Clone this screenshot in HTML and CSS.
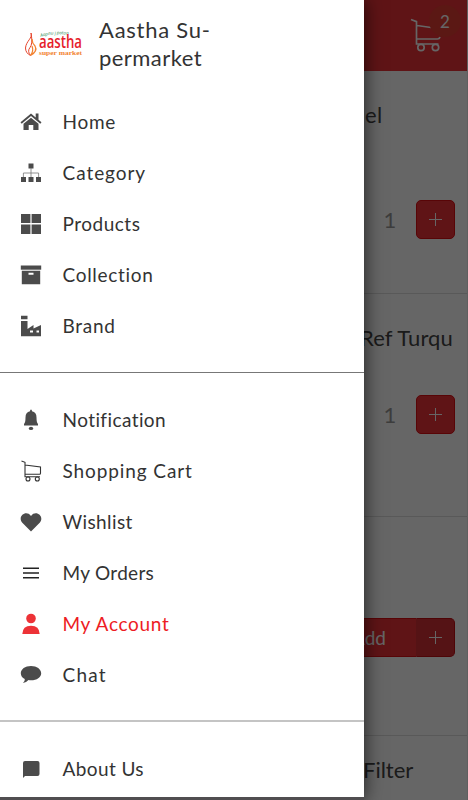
FILE: index.html
```html
<!DOCTYPE html>
<html lang="en">
<head>
<meta charset="utf-8">
<title>Aastha Supermarket</title>
<link rel="stylesheet" href="styles.css">
</head>
<body>
<div class="screen">
  <main class="shop">
    <header class="topbar">
      <div class="cart">
        <svg width="32" height="34" viewBox="0 0 32 34" fill="none" stroke="#fff" stroke-width="1.7"><path d="M1 1.500l5.500 2.200v22.300h22M7 7.500l14 2M7 21h20.500q2 0 2.500-2"/><circle cx="11" cy="29.500" r="3.200"/><circle cx="25.500" cy="29.500" r="3.200"/></svg>
        <span class="badge">2</span>
      </div>
    </header>
    <section class="product first">
      <h2 class="name n1">el</h2>
      <div class="stepper"><span class="minus"></span><span class="qty">1</span><span class="plus"></span></div>
    </section>
    <section class="product second">
      <h2 class="name n2">Ref Turqu</h2>
      <div class="stepper"><span class="minus"></span><span class="qty">1</span><span class="plus"></span></div>
    </section>
    <section class="product third">
      <div class="add"><span class="add-label">Add</span><span class="plus darker"></span></div>
    </section>
    <section class="product fourth"><h2 class="name n4">Filter</h2></section>
  </main>
  <div class="scrim"></div>
  <aside class="drawer">
    <div class="brand">
      <svg class="logo" width="60" height="32" viewBox="0 0 60 32">
        <path d="M7 4C9 9 2 12 1.500 19q0 5 5 7.500Q3 22 6 18.500 9 15 7 4" fill="none" stroke="#e6452c" stroke-width="1"/>
        <path d="M8 10q0 4 3 7 3 5-4.500 9.500Q10 22 8 17" fill="none" stroke="#f28331" stroke-width="1.300"/>
        <path id="arc" d="M17 8Q28 4 46 6" fill="none"/>
        <text class="logo-tag"><textPath href="#arc">Aapnu j potanu</textPath></text>
        <text class="logo-name" x="15" y="19" textLength="43" lengthAdjust="spacingAndGlyphs">aastha</text>
        <text class="logo-sub" x="15" y="26" textLength="43" lengthAdjust="spacingAndGlyphs">super market</text>
      </svg>
      <h1 class="title">Aastha Su-<br><span class="title-end">permarket</span></h1>
    </div>
    <nav>
      <ul class="menu">
        <li><svg viewBox="0 0 22 22"><path d="M11 2.500L.5 11.300l1.200 1.400L11 5.100l9.300 7.600 1.200-1.400-3-2.500V2.500h-2.800v3.900zM11 6.700l-7.500 6.100V19h5.200v-5h4.600v5h5.200v-6.200z"/></svg><span class="t-home">Home</span></li>
        <li><svg viewBox="0 0 22 22"><path d="M8.500 1.500h5v5h-5zM1 15h5v5H1zM8.500 15h5v5h-5zM16 15h5v5h-5z"/><path d="M11 6v9M3.400 15v-4h15.200v4" fill="none" stroke="#777" stroke-width=".8"/></svg><span class="t-category">Category</span></li>
        <li><svg viewBox="0 0 22 22"><path d="M1 1h9.400v9H1zM11.600 1H21v9h-9.400zM1 11.500h9.400V21H1zM11.600 11.500H21V21h-9.400z"/></svg><span class="t-products">Products</span></li>
        <li><svg viewBox="0 0 22 22"><path d="M.8 1.500h20.400v4.200H.8z"/><path fill-rule="evenodd" d="M1.800 6.800h18.400v13.400H1.800zM8.500 8.700v2h5v-2z"/></svg><span>Collection</span></li>
        <li><svg viewBox="0 0 22 22"><path fill-rule="evenodd" d="M1 .8h6.500v3.500H1zM1 6h6.500v8l6-4v3.500L21 10v11.200H1zM10 15.500v2h3v-2zM16.500 15.500v2h2.500v-2z"/></svg><span>Brand</span></li>
      </ul>
      <ul class="menu">
        <li><svg viewBox="0 0 22 22"><path d="M10 2.200q0-1.700 1-1.700t1 1.700q4.500.8 4.500 6.300 0 5 1.500 6.500v1.500H4V15q1.500-1.500 1.500-6.500 0-5.500 4.500-6.300z"/><ellipse cx="11" cy="19.400" rx="2.200" ry="1.700"/></svg><span class="t-notification">Notification</span></li>
        <li><svg viewBox="0 0 22 22" class="line"><path d="M1.500 1l3.500 1.300v14.500h15M5 5l15.500 2v6.200q0 1-1 1H5"/><circle cx="8" cy="19" r="2"/><circle cx="17.300" cy="19" r="2"/></svg><span class="t-shopping">Shopping Cart</span></li>
        <li><svg viewBox="0 0 22 22"><path d="M11 20.500L2.300 11.800C-3 5.500 6-1.500 11 4.900c5-6.400 14 .6 8.700 6.900z"/></svg><span class="t-wishlist">Wishlist</span></li>
        <li><svg viewBox="0 0 22 22" class="bars"><path d="M3 5.500h16V7H3zM3 10.200h16v1.500H3zM3 14.900h16v1.500H3z"/></svg><span class="t-orders">My Orders</span></li>
        <li class="active"><svg viewBox="0 0 22 22"><circle cx="11" cy="5.500" r="4.800"/><path d="M2.300 21q.3-8.300 8.700-8.300T19.700 21z"/></svg><span>My Account</span></li>
        <li><svg viewBox="0 0 22 22"><path d="M11 2c5.800 0 10.200 3.200 10.200 7.200s-4.400 7.100-10.200 7.100q-1.300 0-2.500-.2-2.500 2.800-5.500 2.900 2-1.500 1.800-4C2.300 13.800.8 11.700.8 9.200.8 5.200 5.200 2 11 2z"/></svg><span class="t-chat">Chat</span></li>
      </ul>
      <ul class="menu light">
        <li><svg viewBox="0 0 22 22"><path d="M5 3h12.500q2 0 2 2v11q0 2-2 2H5l-2 2V5q0-2 2-2z"/></svg><span class="t-about">About Us</span></li>
      </ul>
    </nav>
  </aside>
</div>
</body>
</html>
```
FILE: styles.css
```css
* { box-sizing: border-box; }
body, h1, h2, ul { margin: 0; padding: 0; }
body { font-family: Lato, "Open Sans", sans-serif; background: #fff; }
.screen { position: relative; width: 468px; height: 800px; overflow: hidden; }

.shop { height: 800px; display: flex; flex-direction: column; background: #fff; border-right: 1px solid #eee; color: #444; }
.topbar { height: 71px; flex: none; display: flex; justify-content: flex-end; padding: 18px 25px 0 0; background: #ed3237; }
.cart { position: relative; width: 32px; height: 34px; }
.badge { position: absolute; left: 19px; top: -13px; width: 32px; height: 32px; border-radius: 50%; background: #e43d33; color: #fff; font-size: 17px; line-height: 34px; text-align: center; }
.product { flex: none; border-bottom: 1px solid #dedede; padding-right: 12px; }
.first, .second { height: 223px; }
.third { height: 219px; padding-top: 101px; }
.fourth { height: 64px; border: 0; }
.name { font-weight: 400; font-size: 22px; line-height: 28px; padding-top: 30px; letter-spacing: .35px; white-space: nowrap; }
.n1 { padding-left: 365px; }
.n2 { padding-left: 360px; letter-spacing: .1px; }
.n4 { padding: 20px 0 0 363px; letter-spacing: 0; }
.stepper { display: flex; justify-content: flex-end; align-items: center; margin-top: 71px; }
.second .stepper { margin-top: 43px; }
.minus { width: 39px; height: 39px; border-radius: 5px; background: #ed3237; visibility: hidden; }
.qty { width: 52px; text-align: center; font-size: 22px; color: #999; }
.plus { width: 39px; height: 39px; border-radius: 5px; background: linear-gradient(#fff, #fff) center / 13px 1px no-repeat, linear-gradient(#fff, #fff) center / 1px 13px no-repeat, #ed3237; border: 1px solid #dc0d12; }
.plus.darker { background-color: #d43035; border-color: #c40d12; border-left-color: #d43035; border-radius: 0 5px 5px 0; }
.add { display: flex; justify-content: flex-end; }
.add-label { width: 116px; height: 39px; padding-right: 30px; background: #ed3237; color: #fff; font-size: 19px; line-height: 38px; text-align: right; border-radius: 5px 0 0 5px; border-top: 1px solid #dc0d12; border-bottom: 1px solid #dc0d12; }

.scrim { position: absolute; inset: 0; background: rgba(0, 0, 0, .6); }
.drawer { position: absolute; left: 0; top: 0; width: 364px; height: 800px; background: #fff; border-bottom: 3px solid #504e50; box-shadow: 0 0 18px rgba(0, 0, 0, .7); overflow: hidden; }
.brand { height: 96px; display: flex; padding: 16px 0 0 24px; }
.logo { flex: none; margin-top: 13px; overflow: visible; }
.logo-tag { font: italic 4.500px "Open Sans", sans-serif; fill: #23864d; }
.logo-name { font: 600 18px "Open Sans", sans-serif; fill: #e61c2b; }
.logo-sub { font: 700 7px "Liberation Serif", serif; fill: #f28331; }
.title { margin-left: 15px; font-weight: 400; font-size: 22px; line-height: 28px; letter-spacing: .75px; color: #333; }
.title-end { letter-spacing: .45px; }
.menu { list-style: none; }
.menu + .menu { margin-top: 20px; padding-top: 21px; border-top: 1px solid #777; }
.menu + .light { border-top: 2px solid #c4c4c4; margin-top: 19px; }
.menu li { display: flex; align-items: center; height: 51.200px; padding-left: 20px; font-size: 19px; line-height: 26px; letter-spacing: .7px; color: #333; white-space: nowrap; }
.menu svg { flex: none; width: 22px; height: 22px; margin-right: 20.500px; fill: #4b4b4b; }
.menu .line { fill: none; stroke: #333; stroke-width: 1.100; }
.menu .bars { fill: #222; }
.menu .active { color: #ed1c24; }
.menu .active svg { fill: #ed3237; }
.t-category { letter-spacing: .95px; }
.t-products { letter-spacing: .5px; }
.t-notification { letter-spacing: .42px; }
.t-shopping { letter-spacing: .9px; }
.t-wishlist, .t-about { letter-spacing: .4px; }
.t-orders { letter-spacing: .3px; }
.t-chat { letter-spacing: 1.200px; }
```
